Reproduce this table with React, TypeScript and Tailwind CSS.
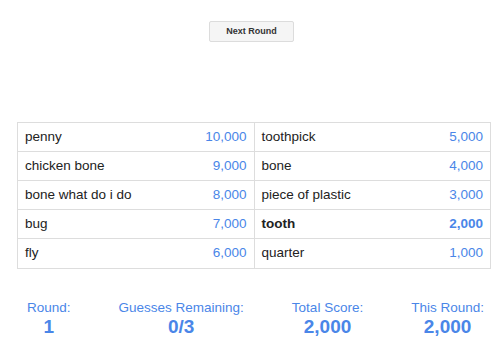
import React from "react";

const left: [string, string][] = [
  ["penny", "10,000"],
  ["chicken bone", "9,000"],
  ["bone what do i do", "8,000"],
  ["bug", "7,000"],
  ["fly", "6,000"],
];
const right: [string, string][] = [
  ["toothpick", "5,000"],
  ["bone", "4,000"],
  ["piece of plastic", "3,000"],
  ["tooth", "2,000"],
  ["quarter", "1,000"],
];

function Cell({ word, pts, bold, last }: { word: string; pts: string; bold?: boolean; last?: boolean }) {
  return (
    <div
      className={`flex h-[29px] items-center justify-between px-[7px] ${last ? "" : "border-b border-[#dddddd]"}`}
    >
      <span className={`text-[#222222] ${bold ? "font-bold" : ""}`}>{word}</span>
      <span className={`text-[#4a86e8] ${bold ? "font-bold" : ""}`}>{pts}</span>
    </div>
  );
}

function Stat({ label, value }: { label: string; value: string }) {
  return (
    <div className="flex flex-col items-center text-[#4a86e8]">
      <span className="text-[13.5px] leading-[16px]">{label}</span>
      <span className="text-[19px] font-bold leading-[22px]">{value}</span>
    </div>
  );
}

export default function App() {
  return (
    <div
      className="w-[500px] h-[343px] bg-white text-[13.5px]"
      style={{ fontFamily: '"Liberation Sans", Arial, sans-serif' }}
    >
      <div className="flex justify-center pt-[21px] pl-[3px]">
        <button className="h-[21px] w-[85px] rounded-[2px] border border-[#dcdcdc] bg-[#f5f5f5] text-[9px] font-bold text-[#333333]">
          Next Round
        </button>
      </div>
      <div className="ml-[17px] mt-[80px] flex w-[474px] border border-[#dddddd]">
        <div className="flex-1 border-r border-[#dddddd]">
          {left.map(([w, p], i) => (
            <Cell key={w} word={w} pts={p} last={i === 4} />
          ))}
        </div>
        <div className="flex-1">
          {right.map(([w, p], i) => (
            <Cell key={w} word={w} pts={p} bold={w === "tooth"} last={i === 4} />
          ))}
        </div>
      </div>
      <div className="mt-[31px] flex gap-[48px] pl-[27px]">
        <Stat label="Round:" value="1" />
        <Stat label="Guesses Remaining:" value="0/3" />
        <Stat label="Total Score:" value="2,000" />
        <Stat label="This Round:" value="2,000" />
      </div>
    </div>
  );
}
